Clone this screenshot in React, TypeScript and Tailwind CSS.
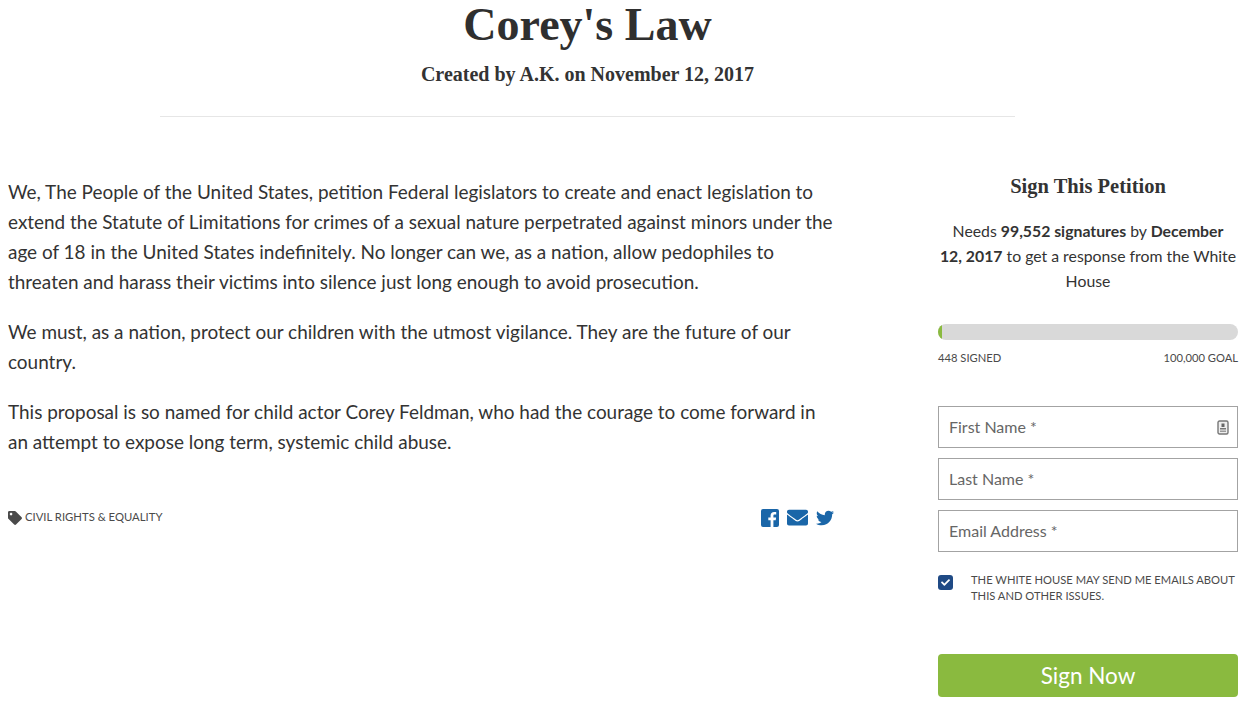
import React from 'react';
import { FaEnvelope, FaTwitter, FaTag, FaCheck } from 'react-icons/fa';

const sans = "font-['Lato','Noto_Sans',sans-serif]";
const serif = "font-['Liberation_Serif','DejaVu_Serif',serif]";

const Field: React.FC<{ label: string; icon?: boolean }> = ({ label, icon }) => (
  <div className="flex h-[42px] items-center justify-between border border-[#a3a3a3] pl-[10px] pr-[8px] text-[16px] text-[#666]">
    <span>{label}</span>
    {icon && (
      <svg width="12" height="15" viewBox="0 0 12 15">
        <rect x="1" y="1" width="10" height="13" rx="1.5" fill="#eee" stroke="#777" strokeWidth="1.4" />
        <rect x="4.5" y="3.5" width="3" height="3.5" fill="#666" />
        <rect x="3" y="8" width="6" height="1.5" fill="#777" />
        <rect x="3" y="10.5" width="6" height="1.5" fill="#999" />
      </svg>
    )}
  </div>
);

export default function App() {
  return (
    <div className={`${sans} h-[708px] w-[1249px] overflow-hidden bg-white text-[#333]`}>
      {/* Title block */}
      <header className="ml-[160px] w-[855px] border-b border-[#e6e6e6] pb-[29px] text-center">
        <h1 className={`${serif} text-[46px] font-bold leading-[50px] text-[#2f2f2f]`}>Corey's Law</h1>
        <p className={`${serif} mt-[11px] text-[20px] font-bold leading-[26px] text-[#333]`}>
          Created by A.K. on November 12, 2017
        </p>
      </header>

      <div className="mt-[57px] flex items-start pl-[8px]">
        {/* Petition body */}
        <main className="w-[826px] pt-[3px]">
          <div className="flex flex-col gap-[20px] text-[18.95px] leading-[30px] text-[#333]">
            <p>
              We, The People of the United States, petition Federal legislators to create and enact legislation to
              extend the Statute of Limitations for crimes of a sexual nature perpetrated against minors under the
              age of 18 in the United States indefinitely. No longer can we, as a nation, allow pedophiles to
              threaten and harass their victims into silence just long enough to avoid prosecution.
            </p>
            <p>
              We must, as a nation, protect our children with the utmost vigilance. They are the future of our
              country.
            </p>
            <p>
              This proposal is so named for child actor Corey Feldman, who had the courage to come forward in
              an attempt to expose long term, systemic child abuse.
            </p>
          </div>
          <div className="mt-[50px] flex items-center justify-between">
            <div className="flex items-center gap-[3px] text-[11.3px] text-[#4a4a4a]">
              <FaTag className="h-[14px] w-[14px] text-[#4a4a4a]" />
              <span>CIVIL RIGHTS &amp; EQUALITY</span>
            </div>
            <div className="flex items-center gap-[8px] text-[#1a66a8]">
              <svg width="18" height="18" viewBox="0 0 18 18">
                <path
                  fill="currentColor"
                  d="M2 0h14a2 2 0 0 1 2 2v14a2 2 0 0 1-2 2h-3.600v-6.800h2.300l.4-2.700h-2.700V6.800c0-.8.3-1.300 1.300-1.300h1.500V3.100c-.3 0-1.100-.1-2.100-.1-2.100 0-3.500 1.300-3.500 3.600v1.900H7.300v2.700h2.300V18H2a2 2 0 0 1-2-2V2a2 2 0 0 1 2-2z"
                />
              </svg>
              <FaEnvelope className="h-[21px] w-[21px]" />
              <FaTwitter className="h-[18px] w-[18px]" />
            </div>
          </div>
        </main>

        {/* Signature form */}
        <aside className="ml-[104px] w-[300px]">
          <h2 className={`${serif} text-center text-[20.5px] font-bold leading-[24px] text-[#333]`}>Sign This Petition</h2>
          <p className="mt-[20px] text-center text-[15.8px] leading-[25px] text-[#333]">
            Needs <b>99,552 signatures</b> by <b>December</b>
            <br />
            <b>12, 2017</b> to get a response from the White House
          </p>
          <div className="mt-[31px] h-[16px] overflow-hidden rounded-full bg-[#d9d9d9]">
            <div className="h-full w-[4px] bg-[#8aba3f]" />
          </div>
          <div className="mt-[10px] flex justify-between text-[11.2px] leading-[16px] text-[#4a4a4a]">
            <span>448 SIGNED</span>
            <span>100,000 GOAL</span>
          </div>
          <div className="mt-[40px] flex flex-col gap-[10px]">
            <Field label="First Name *" icon />
            <Field label="Last Name *" />
            <Field label="Email Address *" />
          </div>
          <div className="mt-[20px] flex items-start">
            <span className="mt-[3px] flex h-[15px] w-[15px] shrink-0 items-center justify-center rounded-[3px] bg-[#1f4a85]">
              <FaCheck className="h-[9px] w-[9px] text-white" />
            </span>
            <p className="ml-[18px] text-[11.2px] leading-[16px] text-[#4a4a4a]">
              THE WHITE HOUSE MAY SEND ME EMAILS ABOUT THIS AND OTHER ISSUES.
            </p>
          </div>
          <button className="mt-[50px] flex h-[43px] w-full items-center justify-center rounded-[4px] bg-[#8aba3f] text-[22.5px] text-white">
            Sign Now
          </button>
        </aside>
      </div>
    </div>
  );
}
